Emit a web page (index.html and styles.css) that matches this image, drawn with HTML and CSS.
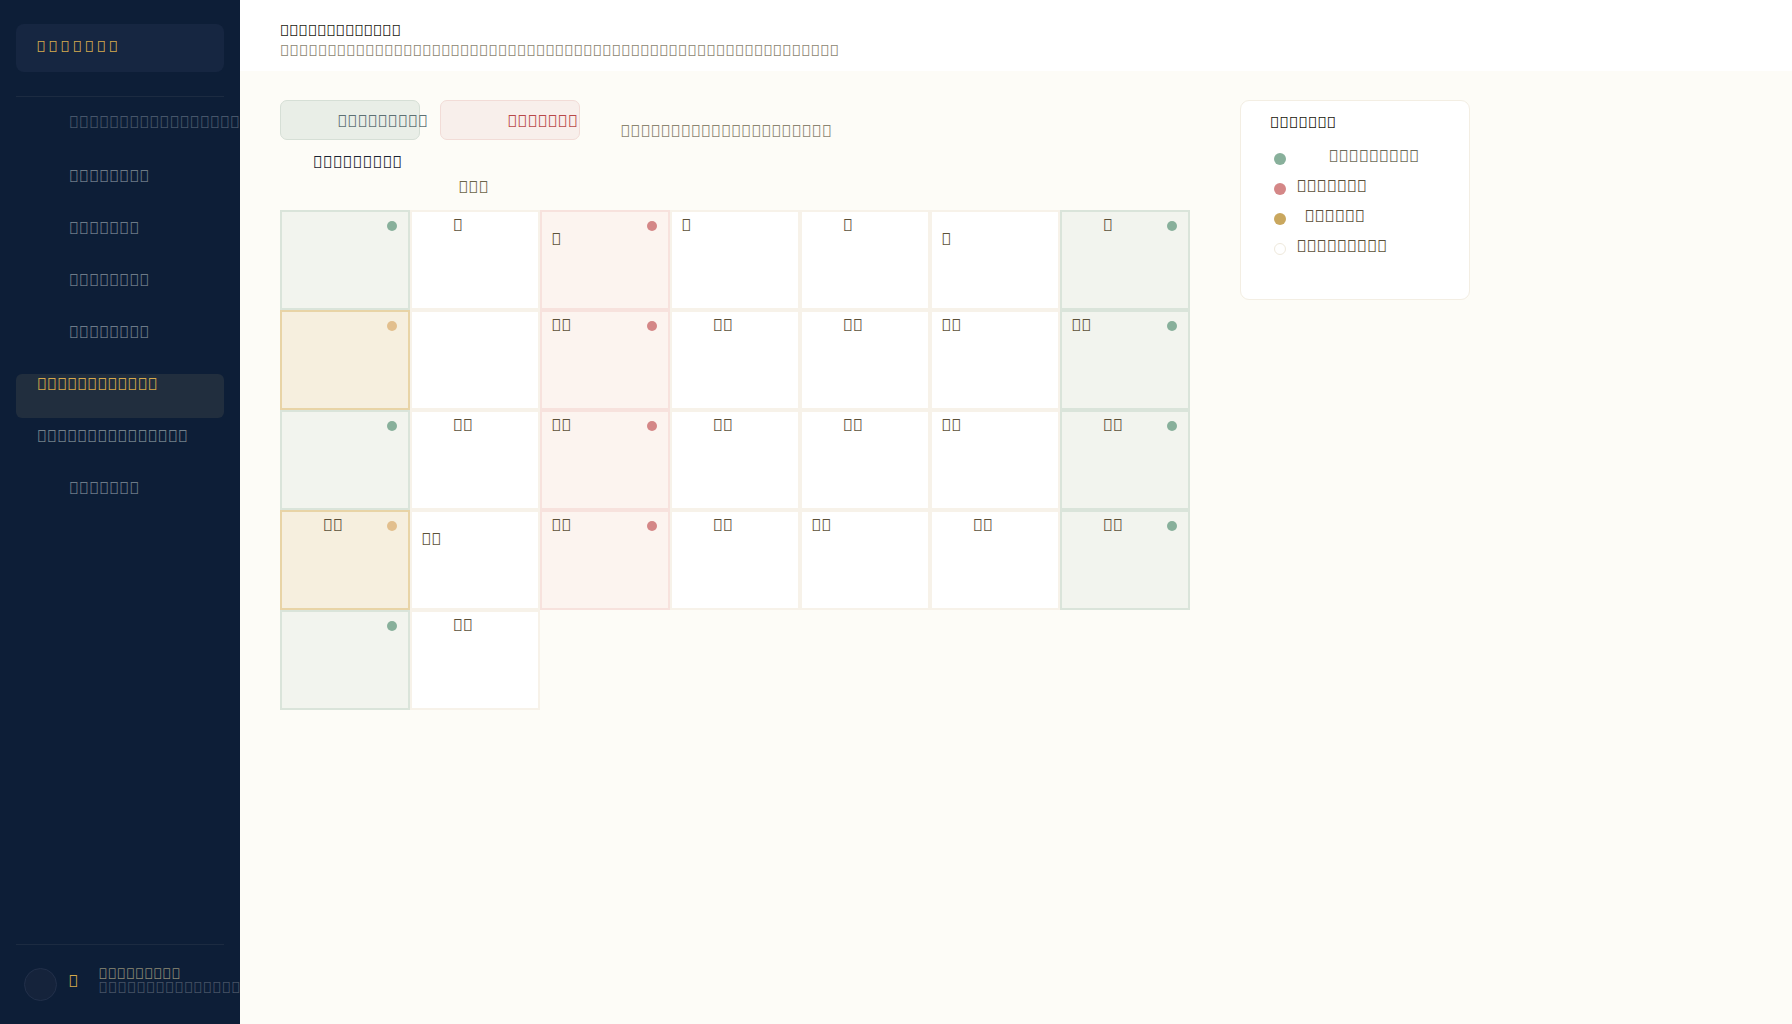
FILE: index.html
```html
<!DOCTYPE html>
<html>
<head>
  <meta charset="UTF-8" />
  <meta name="viewport" content="width=device-width, initial-scale=1.0"/>
  <title>&#xE000;&#xE000;&#xE000;&#xE000;&#xE000;&#xE000;&#xE000;</title>
  <link rel="stylesheet" href="styles.css">
</head>
<body>

<aside class="sidebar">
  <div class="brand">&#xE000;&#xE000;&#xE000;&#xE000;&#xE000;&#xE000;&#xE000;</div>
  <div class="sidebar-rule"></div>

  <nav class="nav">
    <div class="nav-item indent dim">&#xE000;&#xE000;&#xE000;&#xE000;&#xE000;&#xE000;&#xE000;&#xE000;&#xE000;&#xE000;&#xE000;&#xE000;&#xE000;&#xE000;&#xE000;&#xE000;&#xE000;&#xE000;&#xE000;&#xE000;</div>
    <div class="nav-item indent">&#xE000;&#xE000;&#xE000;&#xE000;&#xE000;&#xE000;&#xE000;&#xE000;</div>
    <div class="nav-item indent">&#xE000;&#xE000;&#xE000;&#xE000;&#xE000;&#xE000;&#xE000;</div>
    <div class="nav-item indent">&#xE000;&#xE000;&#xE000;&#xE000;&#xE000;&#xE000;&#xE000;&#xE000;</div>
    <div class="nav-item indent">&#xE000;&#xE000;&#xE000;&#xE000;&#xE000;&#xE000;&#xE000;&#xE000;</div>
    <div class="nav-item active">&#xE000;&#xE000;&#xE000;&#xE000;&#xE000;&#xE000;&#xE000;&#xE000;&#xE000;&#xE000;&#xE000;&#xE000;</div>
    <div class="nav-item plain">&#xE000;&#xE000;&#xE000;&#xE000;&#xE000;&#xE000;&#xE000;&#xE000;&#xE000;&#xE000;&#xE000;&#xE000;&#xE000;&#xE000;&#xE000;</div>
    <div class="nav-item indent">&#xE000;&#xE000;&#xE000;&#xE000;&#xE000;&#xE000;&#xE000;</div>
  </nav>

  <div class="user">
    <div class="avatar"></div>
    <span class="user-initial">&#xE000;</span>
    <div class="user-text">
      <span class="user-name">&#xE000;&#xE000;&#xE000;&#xE000;&#xE000;&#xE000;&#xE000;&#xE000;&#xE000;</span>
      <span class="user-role">&#xE000;&#xE000;&#xE000;&#xE000;&#xE000;&#xE000;&#xE000;&#xE000;&#xE000;&#xE000;&#xE000;&#xE000;&#xE000;&#xE000;&#xE000;&#xE000;&#xE000;&#xE000;</span>
    </div>
  </div>
</aside>

<main class="main">
  <header class="topbar">
    <h1 class="page-title">&#xE000;&#xE000;&#xE000;&#xE000;&#xE000;&#xE000;&#xE000;&#xE000;&#xE000;&#xE000;&#xE000;&#xE000;&#xE000;</h1>
    <p class="page-sub">&#xE000;&#xE000;&#xE000;&#xE000;&#xE000;&#xE000;&#xE000;&#xE000;&#xE000;&#xE000;&#xE000;&#xE000;&#xE000;&#xE000;&#xE000;&#xE000;&#xE000;&#xE000;&#xE000;&#xE000;&#xE000;&#xE000;&#xE000;&#xE000;&#xE000;&#xE000;&#xE000;&#xE000;&#xE000;&#xE000;&#xE000;&#xE000;&#xE000;&#xE000;&#xE000;&#xE000;&#xE000;&#xE000;&#xE000;&#xE000;&#xE000;&#xE000;&#xE000;&#xE000;&#xE000;&#xE000;&#xE000;&#xE000;&#xE000;&#xE000;&#xE000;&#xE000;&#xE000;&#xE000;&#xE000;&#xE000;&#xE000;&#xE000;&#xE000;</p>
  </header>

  <div class="content">
    <section class="planner">
      <div class="toolbar">
        <button class="filter filter-off">&#xE000;&#xE000;&#xE000;&#xE000;&#xE000;&#xE000;&#xE000;&#xE000;&#xE000;</button>
        <button class="filter filter-leave">&#xE000;&#xE000;&#xE000;&#xE000;&#xE000;&#xE000;&#xE000;</button>
        <span class="hint">&#xE000;&#xE000;&#xE000;&#xE000;&#xE000;&#xE000;&#xE000;&#xE000;&#xE000;&#xE000;&#xE000;&#xE000;&#xE000;&#xE000;&#xE000;&#xE000;&#xE000;&#xE000;&#xE000;&#xE000;&#xE000;</span>
      </div>

      <h2 class="planner-title">&#xE000;&#xE000;&#xE000;&#xE000;&#xE000;&#xE000;&#xE000;&#xE000;&#xE000;</h2>
      <div class="month">&#xE000;&#xE000;&#xE000;</div>

      <div class="calendar">
        <!-- week 1 -->
        <div class="day off"><span class="dot green"></span></div>
        <div class="day"><span class="day-num mid">&#xE000;</span></div>
        <div class="day leave"><span class="day-num low">&#xE000;</span><span class="dot red"></span></div>
        <div class="day"><span class="day-num">&#xE000;</span></div>
        <div class="day"><span class="day-num mid">&#xE000;</span></div>
        <div class="day"><span class="day-num low">&#xE000;</span></div>
        <div class="day off"><span class="day-num mid">&#xE000;</span><span class="dot green"></span></div>
        <!-- week 2 -->
        <div class="day pending"><span class="dot amber"></span></div>
        <div class="day"></div>
        <div class="day leave"><span class="day-num">&#xE000;&#xE000;</span><span class="dot red"></span></div>
        <div class="day"><span class="day-num mid">&#xE000;&#xE000;</span></div>
        <div class="day"><span class="day-num mid">&#xE000;&#xE000;</span></div>
        <div class="day"><span class="day-num">&#xE000;&#xE000;</span></div>
        <div class="day off"><span class="day-num">&#xE000;&#xE000;</span><span class="dot green"></span></div>
        <!-- week 3 -->
        <div class="day off"><span class="dot green"></span></div>
        <div class="day"><span class="day-num mid">&#xE000;&#xE000;</span></div>
        <div class="day leave"><span class="day-num">&#xE000;&#xE000;</span><span class="dot red"></span></div>
        <div class="day"><span class="day-num mid">&#xE000;&#xE000;</span></div>
        <div class="day"><span class="day-num mid">&#xE000;&#xE000;</span></div>
        <div class="day"><span class="day-num">&#xE000;&#xE000;</span></div>
        <div class="day off"><span class="day-num mid">&#xE000;&#xE000;</span><span class="dot green"></span></div>
        <!-- week 4 -->
        <div class="day pending"><span class="day-num mid">&#xE000;&#xE000;</span><span class="dot amber"></span></div>
        <div class="day"><span class="day-num low">&#xE000;&#xE000;</span></div>
        <div class="day leave"><span class="day-num">&#xE000;&#xE000;</span><span class="dot red"></span></div>
        <div class="day"><span class="day-num mid">&#xE000;&#xE000;</span></div>
        <div class="day"><span class="day-num">&#xE000;&#xE000;</span></div>
        <div class="day"><span class="day-num mid">&#xE000;&#xE000;</span></div>
        <div class="day off"><span class="day-num mid">&#xE000;&#xE000;</span><span class="dot green"></span></div>
        <!-- week 5 -->
        <div class="day off"><span class="dot green"></span></div>
        <div class="day"><span class="day-num mid">&#xE000;&#xE000;</span></div>
      </div>
    </section>

    <aside class="legend">
      <div class="legend-title">&#xE000;&#xE000;&#xE000;&#xE000;&#xE000;&#xE000;&#xE000;</div>
      <div class="legend-list">
        <div class="legend-item muted"><span class="legend-dot green"></span><span class="legend-label wide">&#xE000;&#xE000;&#xE000;&#xE000;&#xE000;&#xE000;&#xE000;&#xE000;&#xE000;</span></div>
        <div class="legend-item"><span class="legend-dot red"></span><span class="legend-label">&#xE000;&#xE000;&#xE000;&#xE000;&#xE000;&#xE000;&#xE000;</span></div>
        <div class="legend-item"><span class="legend-dot amber"></span><span class="legend-label mid">&#xE000;&#xE000;&#xE000;&#xE000;&#xE000;&#xE000;</span></div>
        <div class="legend-item"><span class="legend-dot empty"></span><span class="legend-label">&#xE000;&#xE000;&#xE000;&#xE000;&#xE000;&#xE000;&#xE000;&#xE000;&#xE000;</span></div>
      </div>
    </aside>
  </div>
</main>

</body>
</html>
```
FILE: styles.css
```css
body {
  margin: 0;
  height: 100vh;
  display: flex;
  overflow: hidden;
  font-family: "Noto Sans", sans-serif;
  background: #fdfcf7;
}

/* sidebar */

.sidebar {
  width: 240px;
  flex: none;
  box-sizing: border-box;
  padding: 24px 16px 0;
  display: flex;
  flex-direction: column;
  background: #0d1e37;
  overflow: hidden;
}

.brand {
  height: 48px;
  padding-left: 20.5px;
  border-radius: 8px;
  background: #162641;
  color: #d5aa4f;
  font-size: 15.6px;
  letter-spacing: 2.7px;
  line-height: 45px;
  white-space: nowrap;
}

.sidebar-rule {
  margin-top: 24px;
  border-top: 1px solid #1c2b41;
}

.nav {
  flex: 1;
  margin-top: 17px;
  display: flex;
  flex-direction: column;
  gap: 8px;
}

.nav-item {
  height: 44px;
  flex: none;
  box-sizing: border-box;
  padding-left: 20.5px;
  border-radius: 6px;
  color: #6d7b88;
  font-size: 16.8px;
  line-height: 20px;
  white-space: nowrap;
}

.nav-item.indent { padding-left: 52.5px; }
.nav-item.dim { color: #47566a; line-height: 16px; }
.nav-item.plain { color: #74818b; }

.nav-item.active {
  background: #212e3e;
  color: #d6a94c;
}

.user {
  height: 80px;
  flex: none;
  box-sizing: border-box;
  padding-left: 7.5px;
  border-top: 1px solid #1c2b41;
  display: flex;
  align-items: center;
}

.avatar {
  width: 33px;
  height: 33px;
  flex: none;
  box-sizing: border-box;
  border-radius: 50%;
  border: 1px solid #22304a;
  background: #15233b;
}

.user-initial {
  margin: 0 0 7px 11.5px;
  color: #d4a94c;
  font-size: 16.8px;
  line-height: 20px;
}

.user-text {
  margin: 0 0 10px 20.5px;
  display: flex;
  flex-direction: column;
  white-space: nowrap;
}

.user-name { color: #8b8975; font-size: 15.2px; line-height: 14px; }
.user-role { color: #475366; font-size: 15.8px; line-height: 14px; }

/* main area */

.main {
  flex: 1;
  display: flex;
  flex-direction: column;
  min-width: 0;
}

.topbar {
  height: 71px;
  box-sizing: border-box;
  padding: 20px 40px 0;
  background: #fff;
}

.page-title {
  margin: 0;
  color: #1b1a10;
  font-size: 15.8px;
  font-weight: 700;
  line-height: 21px;
}

.page-sub {
  margin: 0;
  color: #8b8571;
  font-size: 15.8px;
  line-height: 19px;
  white-space: nowrap;
}

.content {
  display: flex;
  align-items: flex-start;
  gap: 50px;
  padding: 29px 40px;
}

.planner { width: 910px; }

.toolbar {
  height: 40px;
  display: flex;
  align-items: flex-start;
  gap: 20px;
}

.filter {
  display: block;
  width: 140px;
  height: 40px;
  box-sizing: border-box;
  margin: 0;
  padding: 0;
  border: 1.5px solid;
  border-radius: 7px;
  overflow: visible;
  font-family: inherit;
  font-size: 16.8px;
  line-height: 31px;
  text-align: left;
  white-space: nowrap;
}

.filter-off {
  padding-left: 56px;
  background: #e9eee7;
  border-color: #d6dfd6;
  color: #5d7074;
}

.filter-leave {
  padding-left: 66px;
  background: #f8efeb;
  border-color: #f2dcd7;
  color: #b84848;
}

.hint {
  margin: 19px 0 0 20px;
  color: #8b8571;
  font-size: 16.8px;
  line-height: 24px;
  white-space: nowrap;
}

.planner-title {
  margin: 10px 0 0;
  padding-left: 33px;
  color: #192333;
  font-size: 16.8px;
  font-weight: 600;
  line-height: 24px;
}

.month {
  margin-top: 1px;
  padding-left: 178px;
  color: #6b6549;
  font-size: 16.8px;
  line-height: 24px;
}

/* calendar grid */

.calendar {
  margin-top: 11px;
  display: grid;
  grid-template-columns: repeat(7, 130px);
  grid-auto-rows: 100px;
}

.day {
  position: relative;
  box-sizing: border-box;
  border: 2px solid #f7f2e9;
  background: #fff;
}

.day.off { background: #f2f4ee; border-color: #dae4da; }
.day.leave { background: #fcf4ef; border-color: #f7e2dd; }
.day.pending { background: #f6efde; border-color: #e8d4a6; }

.day-num {
  display: block;
  margin: 6.5px 0 0 9px;
  color: #5c5139;
  font-size: 16.8px;
  line-height: 12px;
  white-space: nowrap;
}

.day-num.mid { margin-left: 40.5px; }
.day-num.low { margin-top: 20.5px; }

.dot {
  position: absolute;
  top: 9px;
  right: 11px;
  width: 10px;
  height: 10px;
  border-radius: 50%;
}

.dot.green { background: #88b09b; }
.dot.red { background: #d48787; }
.dot.amber { background: #e2bf8d; }

/* legend card */

.legend {
  width: 230px;
  height: 200px;
  flex: none;
  box-sizing: border-box;
  padding: 9px 0 0 29px;
  border: 1.5px solid #f3eee3;
  border-radius: 9px;
  background: #fff;
}

.legend-title {
  color: #16140a;
  font-size: 15.8px;
  line-height: 24px;
}

.legend-list {
  margin-top: 10px;
  display: flex;
  flex-direction: column;
  gap: 6px;
}

.legend-item {
  height: 24px;
  display: flex;
  align-items: flex-start;
  color: #5a4f38;
  font-size: 16.8px;
  line-height: 24px;
  white-space: nowrap;
}

.legend-item.muted { color: #6c6b58; }

.legend-dot {
  width: 12px;
  height: 12px;
  flex: none;
  box-sizing: border-box;
  margin: 9px 0 0 3.5px;
  border-radius: 50%;
}

.legend-dot.green { background: #88b09b; }
.legend-dot.red { background: #d48787; }
.legend-dot.amber { background: #c9a75e; }
.legend-dot.empty { background: #fff; border: 1px solid #efe9dc; }

.legend-label { margin-left: 10.7px; }
.legend-label.wide { margin-left: 42.7px; }
.legend-label.mid { margin-left: 18.7px; }
```
